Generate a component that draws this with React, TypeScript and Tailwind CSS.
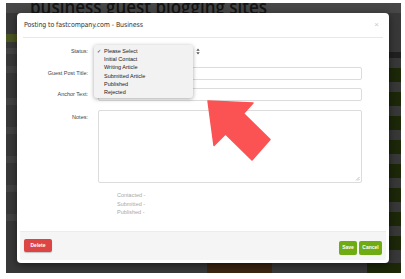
import React from "react";

const sans = { fontFamily: '"Liberation Sans", Arial, sans-serif' };

function UpDown() {
  return (
    <svg width="4" height="7" viewBox="0 0 4 7" className="block">
      <path d="M0.3 2.8 L2 0.6 L3.7 2.8 Z" fill="#555" />
      <path d="M0.3 4.2 L2 6.4 L3.7 4.2 Z" fill="#555" />
    </svg>
  );
}

export default function App() {
  const options = [
    "Please Select",
    "Initial Contact",
    "Writing Article",
    "Submitted Article",
    "Published",
    "Rejected",
  ];
  const bgRows = [0, 1, 2, 3, 4, 5, 6, 7];
  return (
    <div className="relative w-[405px] h-[279px] bg-white overflow-hidden" style={sans}>
      <div className="pt-[3px] pl-[6px]">
        <div className="relative w-[395px] h-[270px] bg-[#383838] overflow-hidden">
          {/* background page (dimmed) */}
          <div className="h-[10px] bg-[#474747] overflow-hidden">
            <div
              className="ml-[24px] -mt-[6px] text-[17px] leading-[20px] font-semibold text-[#141414] whitespace-nowrap origin-left scale-y-[1.2]"
              style={{ fontFamily: '"Open Sans", "DejaVu Sans", sans-serif' }}
            >
              business guest blogging sites
            </div>
          </div>
          <div className="flex justify-between">
            <div className="w-[11px] flex flex-col">
              <div className="mt-[21px] h-[8px] bg-[#4a5620]" />
              <div className="mt-[6px] h-[6px] bg-[#434343]" />
              <div className="mt-[12px] h-[7px] bg-[#424242]" />
              <div className="mt-[25px] h-[7px] bg-[#424242]" />
              <div className="mt-[22px] h-[7px] bg-[#424242]" />
              <div className="mt-[22px] h-[7px] bg-[#424242]" />
              <div className="mt-[22px] h-[7px] bg-[#424242]" />
              <div className="mt-[22px] h-[7px] bg-[#424242]" />
            </div>
            <div className="w-[12px] flex flex-col">
              <div className="mt-[39px] h-[6px] bg-[#202020]" />
              {bgRows.map((i) => (
                <div key={i} className="h-[14px] bg-[#1c2808] mt-[10px] first:mt-[9px]" />
              ))}
            </div>
          </div>
          <div className="absolute left-0 right-0 bottom-0 h-[10px] flex">
            <div className="ml-[201px] w-[65px] h-[10px] bg-[#3b2612]" />
            <div className="ml-auto w-[34px] h-[10px] bg-[#1c2808]" />
          </div>

          {/* modal */}
          <div className="absolute left-[11px] top-[10px] w-[372px] h-[250px] bg-white rounded-[4px] shadow-[0_2px_8px_rgba(0,0,0,0.5)] flex flex-col">
            <div className="h-[25px] mx-[6px] border-b border-[#e8e8e8] flex items-center justify-between pl-[1px] pr-[4px]">
              <span
                className="text-[7px] tracking-[-0.1px] text-[#333] whitespace-nowrap"
                style={{ fontFamily: '"DejaVu Sans Condensed", "DejaVu Sans", sans-serif' }}
              >
                Posting to fastcompany.com - Business
              </span>
              <span className="text-[8px] leading-none text-[#c8c8c8]">×</span>
            </div>

            <div className="relative flex-1 flex flex-col text-[5.5px] text-[#444]">
              <div className="grid grid-cols-[71px_1fr] gap-x-[10px] pr-[27px]">
                <div className="mt-[8px] h-[11px] flex items-center justify-end">Status:</div>
                <div className="mt-[8px] h-[11px] w-[102px] flex items-center justify-end">
                  <UpDown />
                </div>

                <div className="mt-[10px] h-[13px] flex items-center justify-end">Guest Post Title:</div>
                <div className="mt-[10px] h-[13px] border border-[#dcdcdc] rounded-[2px]" />

                <div className="mt-[8px] h-[13px] flex items-center justify-end">Anchor Text:</div>
                <div className="mt-[8px] h-[13px] border border-[#dcdcdc] rounded-[2px]" />

                <div className="mt-[9px] pt-[3px] text-right">Notes:</div>
                <div className="relative mt-[9px] h-[73px] border border-[#dcdcdc] rounded-[2px]">
                  <svg width="5" height="5" viewBox="0 0 5 5" className="absolute right-[1px] bottom-[1px]">
                    <path d="M4.5 1 L1 4.5 M4.5 3 L3 4.5" stroke="#999" strokeWidth="0.6" />
                  </svg>
                </div>

                <div />
                <div className="mt-[8px] pl-[19px] leading-[8.5px] text-[#a8a8a8]">
                  <div>Contacted -</div>
                  <div>Submitted -</div>
                  <div>Published -</div>
                </div>
              </div>

              {/* open select popup */}
              <div className="absolute left-[77px] top-[7px] w-[99px] h-[53px] bg-[#f2f2f2] rounded-[3px] shadow-[0_1px_4px_rgba(0,0,0,0.35)] pt-[2px] text-[#222]">
                {options.map((o, i) => (
                  <div key={o} className="h-[8.2px] leading-[8.2px] flex">
                    <span className="w-[10px] pl-[3px] text-[5px]">{i === 0 ? "✓" : ""}</span>
                    <span>{o}</span>
                  </div>
                ))}
              </div>
            </div>

            <div className="h-[29px] mx-[3px] mb-[3px] bg-[#f5f5f5] border-t border-[#ececec] flex items-start justify-between px-[4px] rounded-b-[2px]">
              <div className="mt-[7px] w-[28px] h-[13px] bg-[#dd4444] rounded-[2px] flex items-center justify-center text-white text-[5px] font-bold shadow-[0_1px_1px_rgba(0,0,0,0.2)]">
                Delete
              </div>
              <div className="mt-[9px] flex gap-[2px]">
                <div className="w-[18px] h-[14px] bg-[#6fab12] rounded-[2px] flex items-center justify-center text-white text-[5px] font-bold">
                  Save
                </div>
                <div className="w-[23px] h-[14px] bg-[#6fab12] rounded-[2px] flex items-center justify-center text-white text-[5px] font-bold">
                  Cancel
                </div>
              </div>
            </div>
          </div>
        </div>
      </div>

      {/* red annotation arrow */}
      <svg className="absolute left-0 top-0 pointer-events-none" width="405" height="279" viewBox="0 0 405 279">
        <path
          d="M208 101 L253 103 L243.5 113.5 L270 139.5 L252 160 L225.5 134 L214 145.5 Z"
          fill="#fb5353"
          stroke="#fb5353"
          strokeWidth="1.5"
          strokeLinejoin="round"
        />
      </svg>
    </div>
  );
}
